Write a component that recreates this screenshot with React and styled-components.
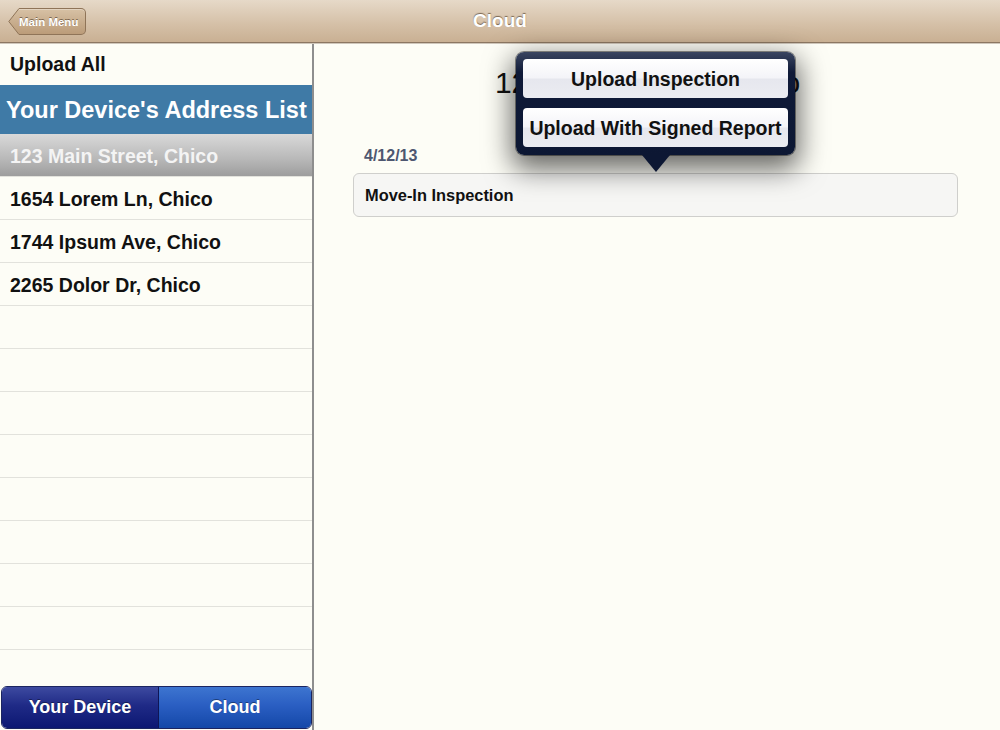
import React from "react";
import styled, { createGlobalStyle } from "styled-components";

const Global = createGlobalStyle`
  html, body { margin: 0; padding: 0; }
  body { font-family: "Liberation Sans", Arial, sans-serif; background: #fdfdf6; }
`;

const Screen = styled.div`
  width: 1000px;
  height: 730px;
  display: flex;
  flex-direction: column;
  overflow: hidden;
  position: relative;
  background: #fdfdf6;
`;

const NavBar = styled.div`
  height: 42px;
  flex: none;
  background: linear-gradient(#e6d9c8, #d4bfa6 60%, #c9b093);
  border-bottom: 1px solid #8c7762;
  box-shadow: 0 1px 0 #cfc7bb;
  display: flex;
  align-items: center;
  justify-content: center;
  position: relative;
`;

const NavTitle = styled.div`
  color: #fff;
  font-weight: bold;
  font-size: 19px;
  text-shadow: 0 -1px 1px rgba(80, 60, 40, 0.7);
`;

const BackButton = styled.div`
  position: absolute;
  left: 8px;
  top: 8px;
  height: 27px;
  display: flex;
  align-items: center;
`;

const BackArrow = styled.svg`
  display: block;
`;

const BackBody = styled.div`
  height: 25px;
  border: 1px solid #8f7458;
  border-left: none;
  border-radius: 0 5px 5px 0;
  background: linear-gradient(#d7c1a5, #bb9c79);
  color: #fff;
  font-size: 11.5px;
  font-weight: bold;
  display: flex;
  align-items: center;
  padding: 0 7px 0 0;
  text-shadow: 0 -1px 0 rgba(70, 50, 30, 0.6);
  box-shadow: inset 0 1px 0 rgba(255, 255, 255, 0.3);
`;

const Body = styled.div`
  flex: 1;
  display: flex;
  min-height: 0;
`;

const Sidebar = styled.div`
  width: 312px;
  flex: none;
  display: flex;
  flex-direction: column;
  border-right: 2px solid #8e8e8e;
  background: #fdfdf6;
`;

const Rows = styled.div`
  flex: 1;
  overflow: hidden;
`;

const Row = styled.div`
  height: 42px;
  box-sizing: content-box;
  border-bottom: 1px solid #e2e2dc;
  display: flex;
  align-items: center;
  padding-left: 10px;
  font-size: 19.5px;
  font-weight: bold;
  line-height: 1;
  color: ${(p) => (p.$selected ? "#f4f4f4" : "#111")};
  background: ${(p) =>
    p.$selected ? "linear-gradient(#d9d9d9, #b8b8b8 60%, #9d9d9d)" : "transparent"};
`;

const RowText = styled.span`
  position: relative;
  top: ${(p) => (p.$first ? 1 : 2)}px;
`;

const ListHeader = styled.div`
  height: 48px;
  background: #3f7aa6;
  color: #fff;
  font-size: 23.5px;
  font-weight: bold;
  display: flex;
  align-items: center;
  padding-left: 6px;
  padding-top: 1px;
  box-sizing: content-box;
  margin-top: -1px;
`;

const Segmented = styled.div`
  height: 41px;
  margin: 0 0 1px 1px;
  display: flex;
  border-radius: 6px;
  overflow: hidden;
  border: 1px solid #1b2560;
`;

const Segment = styled.div`
  flex: ${(p) => (p.$w ? `0 0 ${p.$w}px` : 1)};
  display: flex;
  align-items: center;
  justify-content: center;
  color: #fff;
  font-size: 18px;
  font-weight: bold;
  text-shadow: 0 -1px 0 rgba(0, 0, 0, 0.4);
  background: ${(p) =>
    p.$active
      ? "linear-gradient(#3d4aa0, #1f2a86 45%, #0c1772)"
      : "linear-gradient(#3d75d0, #2a5ec2 45%, #1448a8)"};
  border-right: ${(p) => (p.$active ? "1px solid #0e1656" : "none")};
`;

const Main = styled.div`
  flex: 1;
  display: flex;
  flex-direction: column;
  padding: 0 42px 0 39px;
  position: relative;
`;

const MainTitle = styled.div`
  text-align: center;
  font-size: 30px;
  line-height: 34px;
  color: #111;
  margin-top: 23px;
  height: 34px;
  padding-right: 16px;
  white-space: nowrap;
`;

const DateLabel = styled.div`
  margin-top: 47px;
  padding-left: 11px;
  font-size: 16px;
  line-height: 18px;
  font-weight: bold;
  color: #4e5770;
`;

const Card = styled.div`
  margin-top: 8px;
  height: 42px;
  border: 1px solid #cfcfcc;
  border-radius: 6px;
  background: #f6f6f4;
  display: flex;
  align-items: center;
  padding-left: 11px;
  font-size: 16.4px;
  font-weight: bold;
  color: #111;
`;

const Popover = styled.div`
  position: absolute;
  left: 516px;
  top: 52px;
  width: 279px;
  height: 103px;
  box-sizing: border-box;
  border-radius: 8px;
  background: linear-gradient(#3a4560, #0f1a38 20%, #0c1733);
  box-shadow: 0 10px 28px 4px rgba(0, 0, 0, 0.6), 0 0 0 1px rgba(0, 0, 0, 0.4);
  padding: 7px;
  display: flex;
  flex-direction: column;
  gap: 10px;
`;

const PopArrow = styled.div`
  position: absolute;
  left: 126px;
  bottom: -17px;
  width: 0;
  height: 0;
  border-left: 14px solid transparent;
  border-right: 14px solid transparent;
  border-top: 17px solid #0c1733;
`;

const PopButton = styled.div`
  height: 39px;
  border-radius: 4px;
  background: linear-gradient(#ffffff, #f4f4f8 48%, #e6e7ee 52%, #ebecf1);
  display: flex;
  align-items: center;
  justify-content: center;
  font-size: 19.5px;
  font-weight: bold;
  color: #111;
  padding-top: 1px;
  box-sizing: border-box;
`;

const emptyRows = 9;

const addresses = ["1654 Lorem Ln, Chico", "1744 Ipsum Ave, Chico", "2265 Dolor Dr, Chico"];

export default function App() {
  return (
    <Screen>
      <Global />
      <NavBar>
        <BackButton>
          <BackArrow width="11" height="27" viewBox="0 0 11 27">
            <defs>
              <linearGradient id="bg" x1="0" y1="0" x2="0" y2="1">
                <stop offset="0" stopColor="#d7c1a5" />
                <stop offset="1" stopColor="#bb9c79" />
              </linearGradient>
            </defs>
            <path d="M11 0.5 L 0.8 13.5 L 11 26.5 Z" fill="url(#bg)" />
            <path d="M11 0.5 L 0.8 13.5 L 11 26.5" fill="none" stroke="#8f7458" strokeWidth="1" />
          </BackArrow>
          <BackBody>Main Menu</BackBody>
        </BackButton>
        <NavTitle>Cloud</NavTitle>
      </NavBar>
      <Body>
        <Sidebar>
          <Rows>
            <Row><RowText $first>Upload All</RowText></Row>
            <ListHeader>Your Device's Address List</ListHeader>
            <Row $selected><RowText>123 Main Street, Chico</RowText></Row>
            {addresses.map((a) => (
              <Row key={a}><RowText>{a}</RowText></Row>
            ))}
            {Array.from({ length: emptyRows }).map((_, i) => (
              <Row key={i} />
            ))}
          </Rows>
          <Segmented>
            <Segment $active $w={156}>Your Device</Segment>
            <Segment>Cloud</Segment>
          </Segmented>
        </Sidebar>
        <Main>
          <MainTitle>123 Main Street, Chico</MainTitle>
          <DateLabel>4/12/13</DateLabel>
          <Card>Move-In Inspection</Card>
        </Main>
      </Body>
      <Popover>
        <PopButton>Upload Inspection</PopButton>
        <PopButton>Upload With Signed Report</PopButton>
        <PopArrow />
      </Popover>
    </Screen>
  );
}
